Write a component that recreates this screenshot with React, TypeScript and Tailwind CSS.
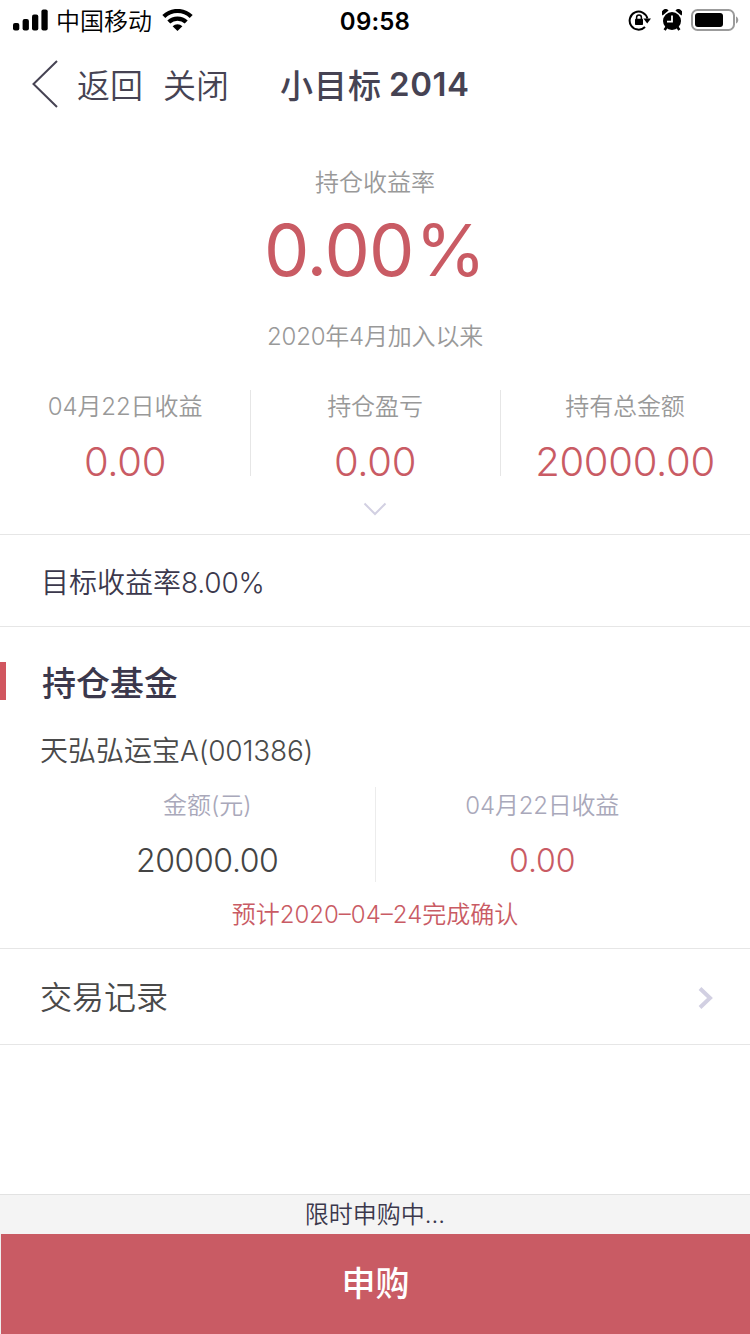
import type { ReactNode } from "react";

const StatusBar = () => (
    <div className="relative flex h-10 shrink-0 items-center text-black">
        <svg className="ml-[13px] h-[22px] w-[35px]" viewBox="0 0 35 22" fill="currentColor">
            <rect x="0" y="14" width="6.3" height="7.5" rx="2" />
            <rect x="9.6" y="10" width="6.3" height="11.5" rx="2" />
            <rect x="19" y="5.5" width="6.3" height="16" rx="2" />
            <rect x="28.4" y="0.5" width="6.3" height="21" rx="2" />
        </svg>
        <span className="mt-[3px] ml-2 text-2xl leading-none">中国移动</span>
        <svg className="ml-[10px] h-[22px] w-[31px]" viewBox="0 0 31 22" fill="none" stroke="currentColor" strokeWidth="4.2">
            <path d="M1.8 7.6a19.5 19.5 0 0 1 27.4 0" />
            <path d="M6.8 13.1a12.4 12.4 0 0 1 17.4 0" />
            <path d="M10.6 17.2a7 7 0 0 1 9.8 0L15.5 22z" fill="currentColor" stroke="none" />
        </svg>
        <div className="absolute inset-x-0 top-[2px] text-center text-2xl leading-10 font-semibold tracking-[0.2px]">09:58</div>
        <div className="mr-[11px] ml-auto flex items-center">
            <svg className="h-[22px] w-[24px]" viewBox="0 0 24 22" fill="none" stroke="currentColor" strokeWidth="2">
                <path d="M17 18A9 9 0 1 1 19.4 9.5" />
                <path d="M15.4 9.4h7.6L19.2 14.6z" fill="currentColor" stroke="none" />
                <rect x="7" y="9.8" width="8" height="6.2" rx="0.8" fill="currentColor" stroke="none" />
                <path d="M8.6 10V8.4a2.4 2.4 0 0 1 4.8 0V10" strokeWidth="1.5" />
            </svg>
            <svg className="ml-[10px] h-[22px] w-[20px]" viewBox="0 0 20 22">
                <circle cx="10" cy="12" r="9" fill="currentColor" />
                <path d="M0.6 6.4A3.6 3.6 0 0 1 6.6 1.6zM19.4 6.4A3.6 3.6 0 0 0 13.4 1.6z" fill="currentColor" />
                <path d="M5 17.5L2.6 21M15 17.5l2.4 3.5" stroke="currentColor" strokeWidth="2.6" />
                <path d="M10 6.4v6.2H5" fill="none" stroke="#fff" strokeWidth="1.8" />
            </svg>
            <svg className="ml-[9px] h-[22px] w-[48px]" viewBox="0 0 48 22">
                <rect x="1" y="1" width="42" height="20" rx="5.5" fill="none" stroke="#9b9b9b" strokeWidth="2" />
                <rect x="4" y="4" width="28" height="14" rx="3" fill="currentColor" />
                <path d="M45 7.5c3 1.2 3 5.8 0 7z" fill="#9b9b9b" />
            </svg>
        </div>
    </div>
);

const NavBar = () => (
    <div className="flex h-[88px] shrink-0 items-center pl-8 text-[33px] leading-none text-[#464353]">
        <svg className="h-[48px] w-[26px]" viewBox="0 0 26 48" fill="none" stroke="currentColor" strokeWidth="2">
            <path d="M25 1L1.5 24L25 47" />
        </svg>
        <span className="mt-1 ml-[19px]">返回</span>
        <span className="mt-1 ml-5">关闭</span>
        <span className="mt-1 ml-[51px] font-medium tracking-[1px]">小目标</span>
        <span className="mt-[1px] ml-[7px] font-semibold tracking-[0.6px]">2014</span>
    </div>
);

const Summary = ({ label, children }: { label: string; children: ReactNode }) => (
    <div className="flex flex-1 flex-col items-center">
        <div className="-ml-px h-8 text-2xl leading-[34px] tracking-[-0.1px] text-[#999]">{label}</div>
        <div className="mt-[18px] -ml-px h-11 text-[40px] leading-[44px] font-[270] tracking-[-0.3px] text-[#c95b64]">{children}</div>
    </div>
);

const App = () => {
    return (
        <div className="flex h-[1334px] w-[750px] flex-col overflow-hidden bg-white font-['Inter','Noto_Sans_CJK_SC',sans-serif] font-[350] whitespace-nowrap">
            <StatusBar />
            <NavBar />

            <div className="flex h-[407px] shrink-0 flex-col items-center border-b border-[#e6e6e6] pt-[38px]">
                <div className="h-8 text-2xl leading-[34px] text-[#999]">持仓收益率</div>
                <div className="mt-[12px] flex h-20 text-[72px] leading-[80px] font-[380] text-[#c95b64]">
                    <span className="tracking-[-1px]">0.00</span>
                    <span className="ml-[2px]">%</span>
                </div>
                <div className="mt-[30px] h-8 text-2xl leading-[34px] tracking-[-0.2px] text-[#999]">2020年4月加入以来</div>
                <div className="mt-[38px] flex h-[86px] w-full divide-x divide-[#e6e6e6] pl-px">
                    <Summary label="04月22日收益">0.00</Summary>
                    <Summary label="持仓盈亏">0.00</Summary>
                    <Summary label="持有总金额">20000.00</Summary>
                </div>
                <svg className="mt-[26px] h-[14px] w-6" viewBox="0 0 24 14" fill="none" stroke="#d2d0e2" strokeWidth="2">
                    <path d="M1.5 1.5L12 12L22.5 1.5" />
                </svg>
            </div>

            <div className="flex h-[92px] shrink-0 items-center border-b border-[#e6e6e6] pt-[4px] pl-[41px] text-[28px] leading-none text-[#3b384c]">
                目标收益率<span className="tracking-[-0.2px]">8.00%</span>
            </div>

            <div className="flex h-[322px] shrink-0 flex-col border-b border-[#e6e6e6] pt-[35px]">
                <div className="flex h-[38px] items-center">
                    <div className="h-[38px] w-[6px] bg-[#d1565f]" />
                    <div className="mt-[5px] ml-9 text-[34px] leading-none font-medium text-[#3b384c]">持仓基金</div>
                </div>
                <div className="mt-[31px] ml-10 h-10 text-[28px] leading-10 text-[#4a4a4a]">
                    天弘弘运宝<span className="tracking-[-0.2px]">A(001386)</span>
                </div>
                <div className="mt-[16px] flex h-[95px] px-10">
                    <div className="flex flex-1 flex-col items-center border-r border-[#ececec]">
                        <div className="h-9 text-2xl leading-[38px] text-[#a9a8ba]">金额(元)</div>
                        <div className="mt-[17px] h-10 text-[32px] leading-[42px] tracking-[-0.4px] text-[#444]">20000.00</div>
                    </div>
                    <div className="flex flex-1 flex-col items-center">
                        <div className="-ml-px h-9 text-2xl leading-[38px] tracking-[-0.2px] text-[#a9a8ba]">04月22日收益</div>
                        <div className="mt-[17px] -ml-px h-10 text-[32px] leading-[42px] tracking-[-0.1px] text-[#c95b64]">0.00</div>
                    </div>
                </div>
                <div className="mt-4 h-8 text-center text-2xl leading-[34px] text-[#c95b64]">预计2020–04–24完成确认</div>
            </div>

            <div className="flex h-[96px] shrink-0 items-center justify-between border-b border-[#e6e6e6] pr-9 pl-10 text-[32px] leading-none text-[#4a4a4a]">
                <span className="mt-[3px]">交易记录</span>
                <svg className="mt-[2px] h-[22px] w-4" viewBox="0 0 16 22" fill="none" stroke="#d2d0e2" strokeWidth="4">
                    <path d="M2 1.5L12 11L2 20.5" />
                </svg>
            </div>

            <div className="mt-auto h-10 shrink-0 border-t border-[#e2e2e2] bg-[#f4f4f4] text-center text-2xl leading-10 text-[#3b384c]">
                限时申购中...
            </div>
            <div className="h-[100px] shrink-0 border-l border-[#eee] bg-[#c95b64] text-center text-[34px] leading-[100px] font-medium text-white">
                申购
            </div>
        </div>
    );
};

export default App;
